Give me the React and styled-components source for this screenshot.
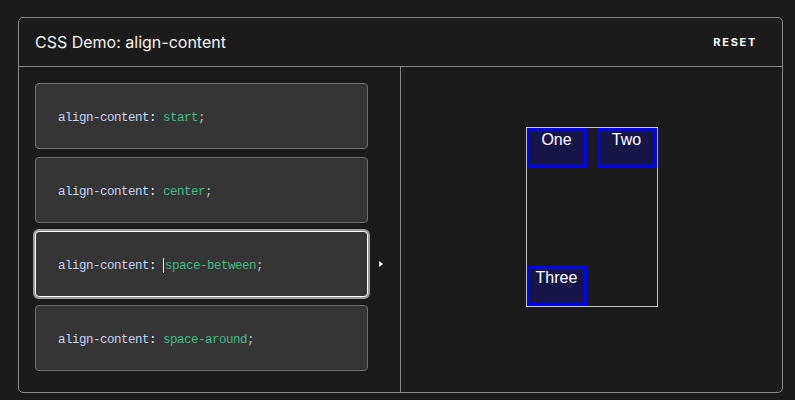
import styled, { createGlobalStyle } from "styled-components";

const CHOICES = ["start", "center", "space-between", "space-around"];
const SELECTED = 2;

const GlobalStyle = createGlobalStyle`
    html, body {
        margin: 0;
        background: #1b1b1b;
    }
    body {
        padding: 17px 12px 7px 18px;
        font-family: Inter, "Noto Sans", sans-serif;
    }
`;

function App() {
    return (
        <>
            <GlobalStyle />
            <Frame>
                <Header>
                    <Title>CSS Demo: align-content</Title>
                    <ResetButton>RESET</ResetButton>
                </Header>
                <Body>
                    <Choices>
                        {CHOICES.map((value, i) => (
                            <ChoiceRow key={value}>
                                <Choice selected={i === SELECTED}>
                                    <Code>
                                        <Prop>align-content</Prop>
                                        <Colon>:</Colon>{" "}
                                        {i === SELECTED && <Caret />}
                                        <Value>{value}</Value>
                                        <Semi>;</Semi>
                                    </Code>
                                </Choice>
                                {i === SELECTED && <Arrow />}
                            </ChoiceRow>
                        ))}
                    </Choices>
                    <Output>
                        <Grid>
                            <Item>One</Item>
                            <Item>Two</Item>
                            <Item>Three</Item>
                        </Grid>
                    </Output>
                </Body>
            </Frame>
        </>
    );
}

export default App;

const Frame = styled.section`
    border: 1px solid #858585;
    border-radius: 5px;
    height: 376px;
    display: flex;
    flex-direction: column;
    box-sizing: border-box;
    color: #fff;
`;

const Header = styled.header`
    height: 48px;
    border-bottom: 1px solid #858585;
    display: flex;
    align-items: center;
    justify-content: space-between;
    padding: 0 25px 0 16px;
`;

const Title = styled.h1`
    margin: 0;
    font-size: 16px;
    font-weight: 400;
    color: #f4f4f4;
`;

const ResetButton = styled.button`
    background: none;
    border: none;
    padding: 0;
    color: #fff;
    font-family: Inter, "Noto Sans", sans-serif;
    font-size: 11px;
    font-weight: 700;
    letter-spacing: 1.7px;
`;

const Body = styled.div`
    flex: 1;
    display: grid;
    grid-template-columns: 382px 1fr;
`;

const Choices = styled.div`
    border-right: 1px solid #858585;
    padding: 16px 0 0 16px;
    display: flex;
    flex-direction: column;
    gap: 8px;
`;

const ChoiceRow = styled.div`
    display: flex;
    align-items: center;
`;

const Choice = styled.div`
    width: 333px;
    height: 66px;
    box-sizing: border-box;
    background: #353535;
    border: 1px solid ${props => props.selected ? "#ffffff" : "#6e6e6e"};
    border-radius: 4px;
    box-shadow: ${props => props.selected ? "0 0 0 2px #9a9a9a" : "none"};
    display: flex;
    align-items: center;
    padding: 3px 0 0 22px;
`;

const Code = styled.code`
    font-family: "Liberation Mono", "DejaVu Sans Mono", monospace;
    font-size: 12.5px;
    letter-spacing: -0.5px;
    white-space: pre;
`;

const Prop = styled.span`
    color: #c6d3f5;
`;

const Colon = styled.span`
    color: #f0f0f0;
`;

const Value = styled.span`
    color: #3ebd88;
`;

const Semi = styled.span`
    color: #bdbdbd;
`;

const Caret = styled.span`
    display: inline-block;
    width: 1px;
    height: 15px;
    background: #f0f0f0;
    margin-right: 1px;
    vertical-align: middle;
`;

const Arrow = styled.span`
    margin-left: 11px;
    width: 0;
    height: 0;
    border-top: 3.5px solid transparent;
    border-bottom: 3.5px solid transparent;
    border-left: 4px solid #fff;
`;

const Output = styled.div`
    display: flex;
    align-items: center;
    justify-content: center;
    padding: 0 0 25px 0;
`;

const Grid = styled.div`
    display: grid;
    grid-template-columns: 60px 60px;
    grid-auto-rows: 40px;
    column-gap: 10px;
    align-content: space-between;
    width: 130px;
    height: 178px;
    border: 1px solid #c5c5c5;
`;

const Item = styled.div`
    box-sizing: border-box;
    background: rgba(0, 0, 255, 0.2);
    border: 3px solid #0000ff;
    color: #fff;
    font-family: "Liberation Sans", Arial, sans-serif;
    font-size: 16px;
    text-align: center;
    line-height: 18px;
`;
